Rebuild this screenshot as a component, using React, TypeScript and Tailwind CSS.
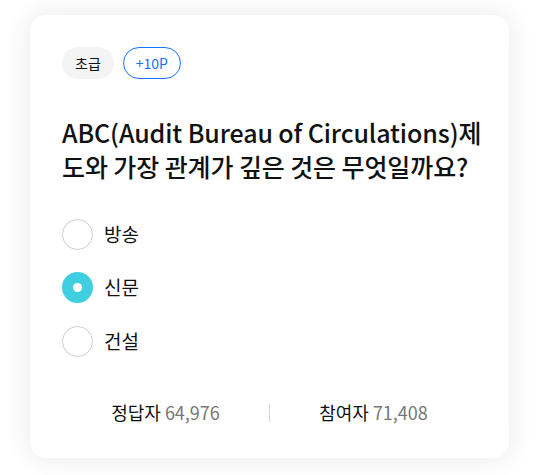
const options = [
  { id: 1, label: '방송' },
  { id: 2, label: '신문' },
  { id: 3, label: '건설' },
];

export default function App() {
  const selected = 2;

  return (
    <div
      className="w-[540px] h-[475px] bg-white pt-[15px] pl-[30px]"
      style={{ fontFamily: '"Noto Sans CJK KR", "Noto Sans", sans-serif' }}
    >
      <div className="w-[479px] h-[443px] bg-white rounded-[16px] shadow-[0_0_28px_rgba(0,0,0,0.09)] px-[32px] pt-[32px]">
        {/* 뱃지 */}
        <div className="flex items-center gap-[9px]">
          <span className="h-[32px] px-[13px] rounded-full bg-[#f4f4f4] flex items-center text-[14px] text-[#111]">
            초급
          </span>
          <span className="h-[32px] px-[12px] rounded-full border border-[#1a73ff] flex items-center text-[14px] text-[#1a73ff]">
            +10P
          </span>
        </div>

        {/* 질문 */}
        <h2 className="mt-[36px] text-[25px] leading-[34px] font-medium text-[#111] tracking-[-0.1px] whitespace-nowrap">
          ABC(Audit Bureau of Circulations)제
          <br />
          도와 가장 관계가 깊은 것은 무엇일까요?
        </h2>

        {/* 보기 */}
        <div className="mt-[36px] flex flex-col gap-[23.5px]">
          {options.map((o) => (
            <label key={o.id} className="flex items-center h-[30px] gap-[11px]">
              {o.id === selected ? (
                <span className="w-[31px] h-[31px] rounded-full bg-[#40cfe1] flex items-center justify-center">
                  <span className="w-[9px] h-[9px] rounded-full bg-white" />
                </span>
              ) : (
                <span className="w-[31px] h-[31px] rounded-full border-[1.5px] border-[#cfcfcf] bg-white" />
              )}
              <span className="text-[19px] text-[#111]">{o.label}</span>
            </label>
          ))}
        </div>

        {/* 통계 */}
        <div className="mt-[43px] flex items-center text-[18px]">
          <div className="flex-1 text-center">
            <span className="text-[#111]">정답자</span>{' '}
            <span className="text-[#777]">64,976</span>
          </div>
          <div className="w-px h-[18px] bg-[#d6d6d6]" />
          <div className="flex-1 text-center">
            <span className="text-[#111]">참여자</span>{' '}
            <span className="text-[#777]">71,408</span>
          </div>
        </div>
      </div>
    </div>
  );
}
